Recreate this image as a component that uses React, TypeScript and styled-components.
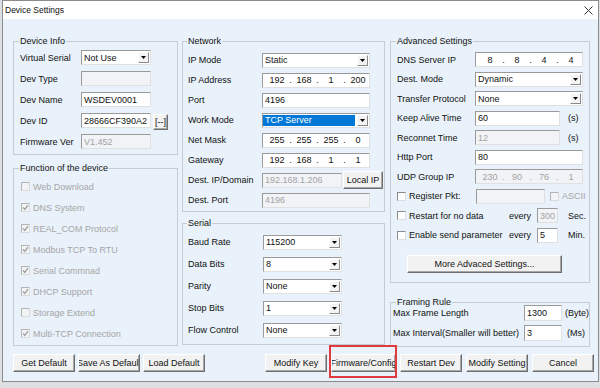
import styled, { createGlobalStyle } from "styled-components";

const GlobalStyle = createGlobalStyle`
  html, body {
    margin: 0;
    padding: 0;
  }
  body {
    width: 600px;
    height: 388px;
    overflow: hidden;
    background: #dcdfe3;
    font-family: "Liberation Sans", Arial, sans-serif;
    font-size: 9px;
    color: #111;
  }
  * {
    box-sizing: border-box;
  }
`;

const Window = styled.div`
  margin-left: 2px;
  width: 597px;
  height: 382px;
  border: 1px solid #8c8c8c;
  background: #e9f1fa;
  display: flex;
  flex-direction: column;
`;

const TitleBar = styled.div`
  height: 18px;
  flex-shrink: 0;
  background: #fff;
  display: flex;
  align-items: center;
  justify-content: space-between;
  padding: 0 5px 0 2px;
`;

const Title = styled.span`
  font-size: 8.5px;
  color: #111;
`;

const Client = styled.div`
  flex: 1;
  padding: 16px 4px 0 10px;
  display: flex;
  flex-direction: column;
`;

const Columns = styled.div`
  display: flex;
  align-items: flex-start;
`;

const Column = styled.div<{ $width: number; $offset?: number }>`
  width: ${(p) => p.$width}px;
  margin-left: ${(p) => p.$offset ?? 0}px;
  display: flex;
  flex-direction: column;
`;

const Group = styled.fieldset<{
  $pad: number;
  $top?: number;
  $padTop?: number;
  $padBottom?: number;
  $pull?: number;
}>`
  margin: ${(p) => p.$top ?? 0}px 0 0 0;
  min-width: 0;
  border: 1px solid #c6ccd2;
  padding: ${(p) => p.$padTop ?? 0}px 0 ${(p) => p.$padBottom ?? 0}px
    ${(p) => p.$pad}px;

  & > div:first-of-type {
    margin-top: ${(p) => -(p.$pull ?? 0)}px;
  }
`;

const Legend = styled.legend<{ $shift?: number }>`
  font-size: 9px;
  line-height: 12px;
  padding: 0 1px;
  margin-left: ${(p) => (p.$shift ?? 0) - 1}px;
  color: #111;
`;

const Row = styled.div<{ $h: number }>`
  height: ${(p) => p.$h}px;
  display: flex;
  align-items: center;
  white-space: nowrap;
`;

const Label = styled.span<{ $w: number }>`
  width: ${(p) => p.$w}px;
  flex-shrink: 0;
  overflow: hidden;
`;

const Field = styled.div<{ $w: number; $disabled?: boolean; $h?: number }>`
  width: ${(p) => p.$w}px;
  height: ${(p) => p.$h ?? 15}px;
  flex-shrink: 0;
  display: flex;
  align-items: center;
  padding: 0 2px;
  border: 1px solid;
  border-color: #9a9a9a #e0e0e0 #e0e0e0 #9a9a9a;
  background: ${(p) => (p.$disabled ? "#f1f3f6" : "#fff")};
  color: ${(p) => (p.$disabled ? "#a3a3a3" : "#111")};
  overflow: hidden;
  white-space: nowrap;
`;

const SelectBox = styled(Field)`
  padding: 0 1px 0 0;
`;

const SelectValue = styled.span<{ $selected?: boolean }>`
  flex: 1;
  align-self: stretch;
  display: flex;
  align-items: center;
  padding-left: 2px;
  margin: ${(p) => (p.$selected ? "1px 2px 1px 0" : "0")};
  background: ${(p) => (p.$selected ? "#0078d7" : "transparent")};
  color: ${(p) => (p.$selected ? "#fff" : "inherit")};
`;

const DropButton = styled.span`
  width: 11px;
  height: 11px;
  flex-shrink: 0;
  display: flex;
  align-items: center;
  justify-content: center;
  background: #f3f3f3;
  border: 1px solid;
  border-color: #fff #8a8a8a #8a8a8a #fff;
`;

const IpBox = styled(Field)`
  padding: 0 0 0 2px;
`;

const IpPart = styled.span`
  width: 24px;
  flex-shrink: 0;
  text-align: center;
`;

const IpDot = styled.span`
  width: 3px;
  flex-shrink: 0;
  text-align: center;
`;

const Button = styled.button<{ $w: number; $h?: number }>`
  width: ${(p) => p.$w}px;
  height: ${(p) => p.$h ?? 18}px;
  flex-shrink: 0;
  margin: 0;
  padding: 0;
  font-family: inherit;
  font-size: 9px;
  color: #111;
  background: #f2f2f2;
  border: 1px solid;
  border-color: #fff #6e6e6e #6e6e6e #fff;
  box-shadow: inset -1px -1px 0 #a8a8a8;
  display: flex;
  align-items: center;
  justify-content: center;
  overflow: hidden;
  white-space: nowrap;
`;

const SmallButton = styled(Button)`
  margin: 3px 0 0 2px;
`;

const SideButton = styled(Button)`
  margin-left: 1px;
`;

const MoreButton = styled(Button)`
  margin: 10px 0 0 10px;
`;

const Unit = styled.span<{ $gap: number }>`
  margin-left: ${(p) => p.$gap}px;
  overflow: hidden;
`;

const Every = styled.span`
  margin-left: 2px;
  width: 28px;
  flex-shrink: 0;
`;

const CheckBox = styled.span<{ $disabled?: boolean }>`
  width: 9px;
  height: 9px;
  flex-shrink: 0;
  display: flex;
  align-items: center;
  justify-content: center;
  border: 1px solid;
  border-color: ${(p) =>
    p.$disabled
      ? "#b4b4b4 #dadada #dadada #b4b4b4"
      : "#8a8a8a #dedede #dedede #8a8a8a"};
  background: ${(p) => (p.$disabled ? "#f1f3f5" : "#fff")};
`;

const CheckLabel = styled.span<{ $w?: number; $disabled?: boolean; $gap?: number }>`
  width: ${(p) => (p.$w ? `${p.$w}px` : "auto")};
  margin-left: ${(p) => p.$gap ?? 0}px;
  flex-shrink: 0;
  display: flex;
  align-items: center;
  gap: 3px;
  overflow: hidden;
  color: ${(p) => (p.$disabled ? "#a6a6a6" : "#111")};
`;

const FunctionItem = styled(Row)`
  margin-left: 1px;
  gap: 3px;
  color: #a6a6a6;
`;

const ButtonBar = styled.div`
  margin-top: 7px;
  display: flex;
  justify-content: space-between;
`;

const ButtonGroup = styled.div<{ $gap: number }>`
  display: flex;
  gap: ${(p) => p.$gap}px;
`;

const Marked = styled.span`
  position: relative;
  display: flex;

  &::after {
    content: "";
    position: absolute;
    top: -9px;
    bottom: -6px;
    left: -2px;
    right: -1px;
    border: 2px solid #e0393e;
    pointer-events: none;
  }
`;

function Arrow() {
  return (
    <svg width="5" height="3" viewBox="0 0 5 3">
      <path d="M0 0h5L2.5 3z" fill="#000" />
    </svg>
  );
}

function Tick({ color }: { color: string }) {
  return (
    <svg width="7" height="7" viewBox="0 0 7 7">
      <path d="M1 3.4l1.8 2L6 1.2" fill="none" stroke={color} strokeWidth="1.4" />
    </svg>
  );
}

function Select({ w, value, selected }: { w: number; value: string; selected?: boolean }) {
  return (
    <SelectBox $w={w}>
      <SelectValue $selected={selected}>{value}</SelectValue>
      <DropButton>
        <Arrow />
      </DropButton>
    </SelectBox>
  );
}

function IpField({ parts, disabled }: { parts: string[]; disabled?: boolean }) {
  return (
    <IpBox $w={108} $disabled={disabled}>
      {parts.map((part, i) => (
        <span key={i} style={{ display: "contents" }}>
          {i > 0 && <IpDot>.</IpDot>}
          <IpPart>{part}</IpPart>
        </span>
      ))}
    </IpBox>
  );
}

function Check({ checked, disabled }: { checked?: boolean; disabled?: boolean }) {
  return (
    <CheckBox $disabled={disabled}>
      {checked && <Tick color={disabled ? "#a0a0a0" : "#222"} />}
    </CheckBox>
  );
}

const functions: [string, boolean][] = [
  ["Web Download", false],
  ["DNS System", true],
  ["REAL_COM Protocol", true],
  ["Modbus TCP To RTU", true],
  ["Serial Commnad", true],
  ["DHCP Support", true],
  ["Storage Extend", false],
  ["Multi-TCP Connection", true],
];

const serial: [string, string][] = [
  ["Baud Rate", "115200"],
  ["Data Bits", "8"],
  ["Parity", "None"],
  ["Stop Bits", "1"],
  ["Flow Control", "None"],
];

export default function App() {
  return (
    <>
      <GlobalStyle />
      <Window>
        <TitleBar>
          <Title>Device Settings</Title>
          <svg width="9" height="9" viewBox="0 0 9 9">
            <path d="M0.5 0.5l8 8M8.5 0.5l-8 8" stroke="#333" strokeWidth="1" />
          </svg>
        </TitleBar>
        <Client>
          <Columns>
            <Column $width={165}>
              <Group $pad={6} $padBottom={2}>
                <Legend>Device Info</Legend>
                <Row $h={21}>
                  <Label $w={61}>Virtual Serial</Label>
                  <Select w={70} value="Not Use" />
                </Row>
                <Row $h={21}>
                  <Label $w={61}>Dev Type</Label>
                  <Field $w={70} $disabled />
                </Row>
                <Row $h={21}>
                  <Label $w={61}>Dev Name</Label>
                  <Field $w={70}>WSDEV0001</Field>
                </Row>
                <Row $h={21}>
                  <Label $w={61}>Dev ID</Label>
                  <Field $w={70}>28666CF390A2</Field>
                  <SmallButton $w={15} $h={16}>
                    [--]
                  </SmallButton>
                </Row>
                <Row $h={21}>
                  <Label $w={61}>Firmware Ver</Label>
                  <Field $w={70} $disabled>
                    V1.452
                  </Field>
                </Row>
              </Group>
              <Group $pad={6} $top={7} $padTop={2} $padBottom={1}>
                <Legend>Function of the device</Legend>
                {functions.map(([name, on]) => (
                  <FunctionItem $h={21} key={name}>
                    <Check checked={on} disabled />
                    {name}
                  </FunctionItem>
                ))}
              </Group>
            </Column>

            <Column $width={203} $offset={4}>
              <Group $pad={5} $padTop={3} $padBottom={1}>
                <Legend>Network</Legend>
                <Row $h={20}>
                  <Label $w={74}>IP Mode</Label>
                  <Select w={108} value="Static" />
                </Row>
                <Row $h={20}>
                  <Label $w={74}>IP Address</Label>
                  <IpField parts={["192", "168", "1", "200"]} />
                </Row>
                <Row $h={20}>
                  <Label $w={74}>Port</Label>
                  <Field $w={108}>4196</Field>
                </Row>
                <Row $h={20}>
                  <Label $w={74}>Work Mode</Label>
                  <Select w={108} value="TCP Server" selected />
                </Row>
                <Row $h={20}>
                  <Label $w={74}>Net Mask</Label>
                  <IpField parts={["255", "255", "255", "0"]} />
                </Row>
                <Row $h={20}>
                  <Label $w={74}>Gateway</Label>
                  <IpField parts={["192", "168", "1", "1"]} />
                </Row>
                <Row $h={20}>
                  <Label $w={74}>Dest. IP/Domain</Label>
                  <Field $w={80} $disabled>
                    192.168.1.206
                  </Field>
                  <SideButton $w={40}>Local IP</SideButton>
                </Row>
                <Row $h={20}>
                  <Label $w={74}>Dest. Port</Label>
                  <Field $w={108} $disabled>
                    4196
                  </Field>
                </Row>
              </Group>
              <Group $pad={5} $top={5} $padTop={2} $padBottom={3}>
                <Legend>Serial</Legend>
                {serial.map(([name, value]) => (
                  <Row $h={22} key={name}>
                    <Label $w={75}>{name}</Label>
                    <Select w={79} value={value} />
                  </Row>
                ))}
              </Group>
            </Column>

            <Column $width={200} $offset={5}>
              <Group $pad={6} $padTop={3} $padBottom={9}>
                <Legend>Advanced Settings</Legend>
                <Row $h={19.5}>
                  <Label $w={78}>DNS Server IP</Label>
                  <IpField parts={["8", "8", "4", "4"]} />
                </Row>
                <Row $h={19.5}>
                  <Label $w={78}>Dest. Mode</Label>
                  <Select w={108} value="Dynamic" />
                </Row>
                <Row $h={19.5}>
                  <Label $w={78}>Transfer Protocol</Label>
                  <Select w={108} value="None" />
                </Row>
                <Row $h={19.5}>
                  <Label $w={78}>Keep Alive Time</Label>
                  <Field $w={85}>60</Field>
                  <Unit $gap={8}>(s)</Unit>
                </Row>
                <Row $h={19.5}>
                  <Label $w={78}>Reconnet Time</Label>
                  <Field $w={85} $disabled>
                    12
                  </Field>
                  <Unit $gap={8}>(s)</Unit>
                </Row>
                <Row $h={19.5}>
                  <Label $w={78}>Http Port</Label>
                  <Field $w={108}>80</Field>
                </Row>
                <Row $h={19.5}>
                  <Label $w={78}>UDP Group IP</Label>
                  <IpField parts={["230", "90", "76", "1"]} disabled />
                </Row>
                <Row $h={19.5}>
                  <CheckLabel $w={79}>
                    <Check />
                    Register Pkt:
                  </CheckLabel>
                  <Field $w={69} $disabled />
                  <CheckLabel $gap={5} $disabled>
                    <Check disabled />
                    ASCII
                  </CheckLabel>
                </Row>
                <Row $h={19.5}>
                  <CheckLabel $w={110}>
                    <Check />
                    Restart for no data
                  </CheckLabel>
                  <Every>every</Every>
                  <Field $w={21} $disabled>
                    300
                  </Field>
                  <Unit $gap={10}>Sec.</Unit>
                </Row>
                <Row $h={19.5}>
                  <CheckLabel $w={110}>
                    <Check />
                    Enable send parameter
                  </CheckLabel>
                  <Every>every</Every>
                  <Field $w={21}>5</Field>
                  <Unit $gap={10}>Min.</Unit>
                </Row>
                <MoreButton $w={155}>More Advaced Settings...</MoreButton>
              </Group>
              <Group $pad={2} $top={13} $pull={5} $padBottom={3}>
                <Legend $shift={4}>Framing Rule</Legend>
                <Row $h={20}>
                  <Label $w={131}>Max Frame Length</Label>
                  <Field $w={38} $h={16}>
                    1300
                  </Field>
                  <Unit $gap={3}>(Byte)</Unit>
                </Row>
                <Row $h={20}>
                  <Label $w={131}>Max Interval(Smaller will better)</Label>
                  <Field $w={38} $h={16}>
                    3
                  </Field>
                  <Unit $gap={5}>(Ms)</Unit>
                </Row>
              </Group>
            </Column>
          </Columns>

          <ButtonBar>
            <ButtonGroup $gap={3}>
              <Button $w={62}>Get Default</Button>
              <Button $w={62}>Save As Default</Button>
              <Button $w={62}>Load Default</Button>
            </ButtonGroup>
            <ButtonGroup $gap={4}>
              <Button $w={62}>Modify Key</Button>
              <Marked>
                <Button $w={65}>Firmware/Config</Button>
              </Marked>
              <Button $w={62}>Restart Dev</Button>
              <Button $w={62}>Modify Setting</Button>
              <Button $w={62}>Cancel</Button>
            </ButtonGroup>
          </ButtonBar>
        </Client>
      </Window>
    </>
  );
}
